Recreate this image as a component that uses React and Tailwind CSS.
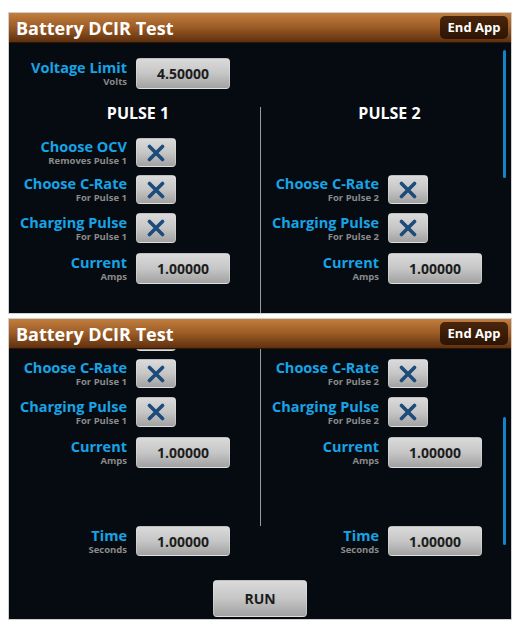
import React from "react";

const XIcon = () => (
  <svg width="18" height="18" viewBox="0 0 18 18">
    <path d="M2.5 2.5 L15.5 15.5 M15.5 2.5 L2.5 15.5" stroke="#1d4b7a" strokeWidth="3.6" strokeLinecap="round" fill="none" />
  </svg>
);

const Label = ({ title, sub }) => (
  <div className="w-[118px] flex flex-col items-end">
    <span className="text-[14.5px] leading-[16px] font-bold text-[#17a4e6] whitespace-nowrap">{title}</span>
    <span className="text-[9.5px] leading-[11px] font-bold text-[#8a8a8a] whitespace-nowrap">{sub}</span>
  </div>
);

const btn = "rounded-[4px] bg-linear-to-b from-[#dadada] via-[#c6c6c6] to-[#a2a2a2] border border-[#e6e6e6]/40 flex items-center justify-center";

const XRow = ({ title, sub, cls }) => (
  <div className={"flex items-center gap-[9px] " + cls}>
    <Label title={title} sub={sub} />
    <div className={btn + " w-[40px] h-full"}>
      <XIcon />
    </div>
  </div>
);

const ValRow = ({ title, sub, value, cls }) => (
  <div className={"flex items-center gap-[9px] " + cls}>
    <Label title={title} sub={sub} />
    <div className={btn + " w-[94px] h-full text-[14px] font-bold text-[#1c1c1c]"}>{value}</div>
  </div>
);

const Content = () => (
  <div className="pt-[15px]">
    <ValRow title="Voltage Limit" sub="Volts" value="4.50000" cls="h-[31px]" />
    <div className="flex mt-[18px]">
      <div className="w-[252px] border-r border-[#9a9a9a] pb-[58px] flex flex-col">
        <div className="text-[16px] leading-[12px] font-bold text-white text-center pl-[7px]">PULSE 1</div>
        <XRow title="Choose OCV" sub="Removes Pulse 1" cls="h-[29px] mt-[19px]" />
        <XRow title="Choose C-Rate" sub="For Pulse 1" cls="h-[29px] mt-[8px]" />
        <XRow title="Charging Pulse" sub="For Pulse 1" cls="h-[30px] mt-[9px]" />
        <ValRow title="Current" sub="Amps" value="1.00000" cls="h-[31px] mt-[10px]" />
      </div>
      <div className="w-[250px] flex flex-col">
        <div className="text-[16px] leading-[12px] font-bold text-white text-center pl-[7px]">PULSE 2</div>
        <div className="h-[29px] mt-[19px]" />
        <XRow title="Choose C-Rate" sub="For Pulse 2" cls="h-[29px] mt-[8px]" />
        <XRow title="Charging Pulse" sub="For Pulse 2" cls="h-[30px] mt-[9px]" />
        <ValRow title="Current" sub="Amps" value="1.00000" cls="h-[31px] mt-[10px]" />
      </div>
    </div>
    <div className="flex">
      <div className="w-[252px]">
        <ValRow title="Time" sub="Seconds" value="1.00000" cls="h-[30px]" />
      </div>
      <div className="w-[250px]">
        <ValRow title="Time" sub="Seconds" value="1.00000" cls="h-[30px]" />
      </div>
    </div>
    <div className="flex justify-center mt-[24px]">
      <div className={btn + " w-[94px] h-[37px] text-[14px] font-bold text-[#1c1c1c]"}>RUN</div>
    </div>
  </div>
);

const Header = () => (
  <div className="h-[30px] shrink-0 flex items-center justify-between pl-[7px] pr-[3px] bg-linear-to-b from-[#c27e3e] via-[#9b5b25] to-[#5f300e] border-b border-[#2e1605]">
    <span className="text-[18px] font-bold text-white leading-none">Battery DCIR Test</span>
    <div className="h-[23px] w-[68px] rounded-[5px] bg-linear-to-b from-[#4a250c] to-[#2c1405] flex items-center justify-center text-[13px] font-bold text-white">End App</div>
  </div>
);

export default function App() {
  return (
    <div className="w-[519px] h-[624px] bg-white pt-[12px] font-['Open_Sans',sans-serif]">
      <div className="ml-[8px] w-[504px] h-[302px] border border-[#cfcfcf] bg-[#060b11] relative flex flex-col overflow-hidden">
        <Header />
        <div className="flex-1 overflow-hidden">
          <Content />
        </div>
        <div className="absolute left-[494px] top-[37px] w-[3px] h-[128px] bg-[#1385c5] rounded-full" />
      </div>
      <div className="ml-[8px] mt-[4px] w-[504px] h-[302px] border border-[#cfcfcf] bg-[#060b11] relative flex flex-col overflow-hidden">
        <Header />
        <div className="flex-1 overflow-hidden">
          <div className="-mt-[122px]">
            <Content />
          </div>
        </div>
        <div className="absolute left-[494px] top-[98px] w-[3px] h-[128px] bg-[#1385c5] rounded-full" />
      </div>
    </div>
  );
}
